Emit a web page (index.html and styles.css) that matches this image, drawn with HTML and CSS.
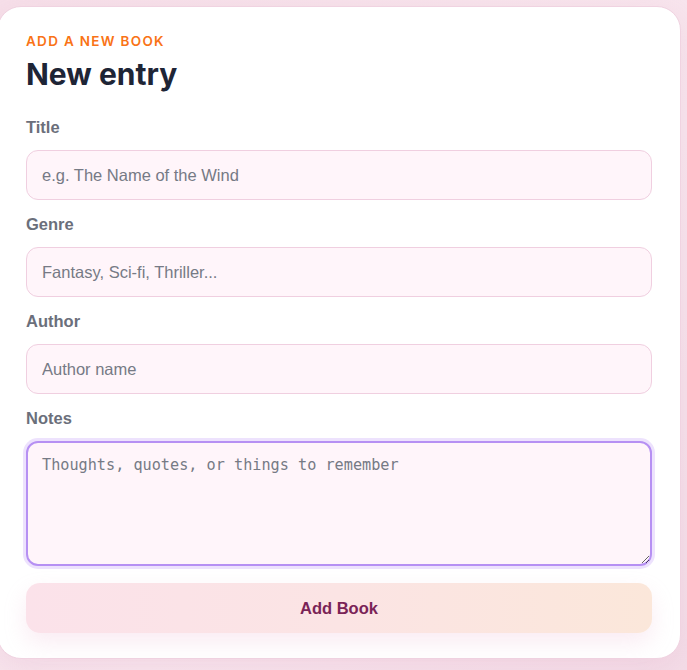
FILE: index.html
```html
<!DOCTYPE html>
<html lang="en">
<head>
    <meta charset="utf-8">
    <meta name="viewport" content="width=device-width, initial-scale=1.0">
    <title>New entry</title>
    <link rel="stylesheet" href="styles.css">
</head>
<body>
    <div class="book-card">
        <p class="eyebrow">Add a new book</p>
        <h1>New entry</h1>

        <form class="book-form">
            <div class="field">
                <label for="title">Title</label>
                <input type="text" id="title" placeholder="e.g. The Name of the Wind">
            </div>
            <div class="field">
                <label for="genre">Genre</label>
                <input type="text" id="genre" placeholder="Fantasy, Sci-fi, Thriller...">
            </div>
            <div class="field">
                <label for="author">Author</label>
                <input type="text" id="author" placeholder="Author name">
            </div>
            <div class="field">
                <label for="notes">Notes</label>
                <textarea id="notes" class="is-focused" placeholder="Thoughts, quotes, or things to remember"></textarea>
            </div>

            <button type="button">Add Book</button>
        </form>
    </div>
</body>
</html>
```

FILE: styles.css
```css
body {
    margin: 0;
    font-family: "Liberation Sans", Arial, sans-serif;
    background: linear-gradient(135deg, #f6dfe9 0%, #f8e6ee 60%, #f4dde8 100%);
    color: #1f2937;
    min-height: 670px;
}
.book-card {
    margin: 6px 6px 0 -3px;
    padding: 26px 28px 25px;
    background: #fff;
    border: 1px solid #f0d3e1;
    border-radius: 24px;
    box-shadow: 0 10px 30px rgba(214, 150, 185, 0.18);
    box-sizing: border-box;
}
.eyebrow {
    margin: 0 0 8px;
    font-family: Inter, "Liberation Sans", sans-serif;
    font-size: 13.5px;
    line-height: 16px;
    font-weight: 600;
    letter-spacing: 1.3px;
    text-transform: uppercase;
    color: #f97316;
}
h1 {
    margin: 0 0 25px;
    font-family: Inter, "Liberation Sans", sans-serif;
    font-size: 30px;
    line-height: 34px;
    font-weight: 700;
    color: #1e2536;
}
.book-form {
    display: flex;
    flex-direction: column;
    gap: 13px;
}
.field {
    display: flex;
    flex-direction: column;
    gap: 12px;
}
label {
    font-size: 16.5px;
    line-height: 22px;
    font-weight: bold;
    color: #6b6f7b;
}
input,
textarea {
    width: 100%;
    box-sizing: border-box;
    background: #fff5fa;
    border: 1px solid #f0cfe0;
    border-radius: 12px;
    color: #1f2937;
    outline: none;
}
input {
    height: 50px;
    padding: 0 15px;
    font-family: "Liberation Sans", Arial, sans-serif;
    font-size: 16.5px;
}
textarea {
    display: block;
    height: 125px;
    padding: 13px 14px;
    font-family: "DejaVu Sans Mono", monospace;
    font-size: 15.2px;
    resize: vertical;
}
input::placeholder,
textarea::placeholder {
    color: #767a85;
}
textarea.is-focused {
    border: 2px solid #b690f3;
    box-shadow: 0 0 0 3px #ede2fd;
}
button {
    margin-top: 4px;
    height: 50px;
    border: none;
    border-radius: 14px;
    background: linear-gradient(90deg, #fbe2ea 0%, #fbe4e4 50%, #fbe7da 100%);
    box-shadow: 0 10px 22px rgba(230, 170, 200, 0.22);
    font-family: "Liberation Sans", Arial, sans-serif;
    font-size: 16.5px;
    font-weight: bold;
    color: #7a2357;
    cursor: pointer;
}
```
